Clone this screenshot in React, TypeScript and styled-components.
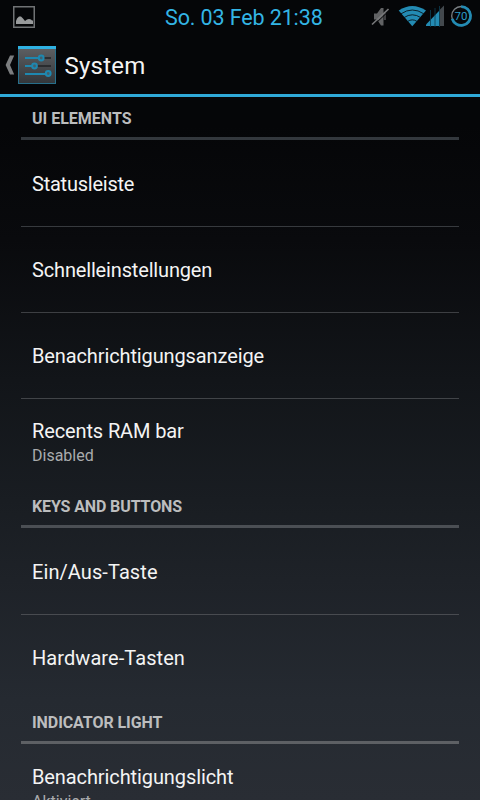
import React from "react";
import styled, { createGlobalStyle } from "styled-components";

const GlobalStyle = createGlobalStyle`
  html, body { margin: 0; padding: 0; background: #050608; }
  * { box-sizing: border-box; }
`;

const Screen = styled.main`
  width: 480px;
  height: 800px;
  overflow: hidden;
  display: flex;
  flex-direction: column;
  font-family: Roboto, "Noto Sans", sans-serif;
  color: #f4f4f4;
  background: linear-gradient(#050608 0, #050608 125px, #090a0d 240px, #121519 380px, #191d22 500px, #1e2228 580px, #252a31 700px, #292d34 800px);
`;

const StatusBar = styled.header`
  height: 36px;
  flex: none;
  display: flex;
  align-items: center;
  padding: 0 7px 0 13px;
  background: #050608;
`;

const Notification = styled.div`
  display: flex;
  padding-bottom: 3px;
`;

const Clock = styled.time`
  font-size: 21.5px;
  line-height: 36px;
  letter-spacing: -0.12px;
  color: #33b5e5;
  margin-left: 130px;
`;

const StatusIcons = styled.div`
  display: flex;
  width: 102px;
  height: 36px;
  margin-left: auto;
`;

const ActionBar = styled.nav`
  height: 61px;
  flex: none;
  display: flex;
  align-items: center;
  gap: 3px;
  padding-left: 5px;
  border-bottom: 3px solid #2fa9d8;
  background: #050608;
`;

const Title = styled.h1`
  margin: 2px 0 0 5.5px;
  font-size: 24px;
  font-weight: 400;
  line-height: 30px;
  letter-spacing: 0.25px;
`;

const List = styled.section`
  flex: none;
  padding: 0 21px;
`;

const SectionTitle = styled.h2<{ $line: string; $spacing?: number }>`
  height: 43px;
  margin: 0;
  padding: 11px 11px 0;
  border-bottom: 3px solid ${(p) => p.$line};
  font-size: 16px;
  line-height: 21px;
  font-weight: 700;
  letter-spacing: ${(p) => p.$spacing ?? 0}px;
  color: #bcbdbe;
`;

const Row = styled.div<{ $line?: string; $tall?: boolean; $top?: number }>`
  height: ${(p) => (p.$tall ? 87 : 86)}px;
  padding: ${(p) => p.$top ?? 2}px 11px 1px;
  border-bottom: ${(p) => (p.$line ? `1px solid ${p.$line}` : "none")};
  display: flex;
  flex-direction: column;
  justify-content: center;
`;

const RowTitle = styled.div<{ $spacing?: number }>`
  font-size: 20px;
  line-height: 26px;
  letter-spacing: ${(p) => p.$spacing ?? 0}px;
`;

const Summary = styled.div<{ $gap?: number }>`
  margin-top: ${(p) => p.$gap ?? 0}px;
  font-size: 16px;
  line-height: 21px;
  color: #a9abad;
`;

const PictureIcon = () => (
  <svg width="22" height="22" viewBox="0 0 22 22">
    <rect x="0.75" y="0.75" width="20.5" height="20.5" fill="none" stroke="#707274" strokeWidth="1.5" />
    <path d="M3 18v-3l1-2.5 2-2h2l2 2 2 2.5 2-1.5 2-.5 2 .5 1 1h1V18z" fill="#999b9c" />
  </svg>
);

const BackIcon = () => (
  <svg width="10" height="20" viewBox="0 0 10 20">
    <path d="M5 .5H9.2L5 10l4.2 9.5H5L.6 10z" fill="#7b7d7f" />
  </svg>
);

const SettingsIcon = () => (
  <svg width="38" height="38" viewBox="0 0 38 38">
    <defs>
      <linearGradient id="panel" x2="0" y2="1">
        <stop stopColor="#5c5e61" />
        <stop offset="1" stopColor="#33373b" />
      </linearGradient>
    </defs>
    <rect width="38" height="38" fill="#276f8b" />
    <rect x="1" y="3" width="36" height="34" fill="url(#panel)" />
    <rect width="38" height="3" fill="#2fb1e2" />
    <path d="M7 12h26M7 20h26M7 28h26" stroke="#202326" strokeWidth="1.5" />
    <path d="M7 12h14M7 20h8M7 28h21" stroke="#1e88b0" strokeWidth="2" />
    <g fill="#455f6b" stroke="#1e88b0" strokeWidth="2">
      <circle cx="23.2" cy="12" r="2.4" />
      <circle cx="16.5" cy="20" r="2.4" />
      <circle cx="30.2" cy="27.5" r="2.4" />
    </g>
  </svg>
);

const MutedIcon = () => (
  <svg width="27" height="36" viewBox="371 0 27 36">
    <path d="M374 13.5h3l4-5.5h2.5v17.5h-2.5l-4-6h-3z" fill="#616264" />
    <path d="M385 13v7" stroke="#505153" strokeWidth="1.5" />
    <path d="M373.2 25.7L389.7 10.2" stroke="#050608" strokeWidth="1" />
    <path d="M372 24.5L388.5 9" stroke="#77787a" strokeWidth="1.7" />
  </svg>
);

const WifiIcon = () => (
  <svg width="28" height="36" viewBox="398 0 28 36">
    <path d="M412.3 26.3L398.7 10.5Q412.3 1.5 426 10.5z" fill="#238bb3" />
    <g fill="none" stroke="#07131a" strokeWidth="0.9">
      <path d="M401 13.8Q412.3 6.2 423.8 13.8" />
      <path d="M404 17.6Q412.3 12 420.8 17.6" />
      <path d="M407.5 21.5Q412.3 18.2 417.2 21.5" />
    </g>
  </svg>
);

const SignalIcon = () => (
  <svg width="22" height="36" viewBox="426 0 22 36">
    <path d="M426 26v-1.5L439.5 10.5V26z" fill="#238bb3" />
    <path d="M439.5 10l4.5-4.5V26h-4.5z" fill="#43494e" />
    <path d="M430.5 10v17M435 8v19M439.5 6v21" stroke="#0a4056" strokeWidth="0.8" />
  </svg>
);

const BatteryIcon = () => (
  <svg width="25" height="36" viewBox="448 0 25 36">
    <circle cx="461.2" cy="16" r="9.5" fill="none" stroke="#7b8084" strokeWidth="1.3" />
    <path d="M461.2 6.6A9.4 9.4 0 1 1 452.2 18.8" fill="none" stroke="#238bb3" strokeWidth="2.8" />
    <text x="460.9" y="20" textAnchor="middle" fontSize="11.5" fontFamily="Roboto, sans-serif" fill="#2a9cc7">70</text>
  </svg>
);

export default function App() {
  return (
    <>
      <GlobalStyle />
      <Screen>
        <StatusBar>
          <Notification>
            <PictureIcon />
          </Notification>
          <Clock>So. 03 Feb 21:38</Clock>
          <StatusIcons>
            <MutedIcon />
            <WifiIcon />
            <SignalIcon />
            <BatteryIcon />
          </StatusIcons>
        </StatusBar>
        <ActionBar>
          <BackIcon />
          <SettingsIcon />
          <Title>System</Title>
        </ActionBar>
        <List>
          <SectionTitle $line="#33383d">UI ELEMENTS</SectionTitle>
          <Row $tall $top={2} $line="#373a3e"><RowTitle $spacing={-0.23}>Statusleiste</RowTitle></Row>
          <Row $top={1} $line="#3d3f43"><RowTitle $spacing={-0.16}>Schnelleinstellungen</RowTitle></Row>
          <Row $top={1} $line="#414448"><RowTitle $spacing={-0.12}>Benachrichtigungsanzeige</RowTitle></Row>
          <Row $top={1}>
            <RowTitle $spacing={-0.12}>Recents RAM bar</RowTitle>
            <Summary $gap={1}>Disabled</Summary>
          </Row>
          <SectionTitle $line="#4b4f54" $spacing={-0.12}>KEYS AND BUTTONS</SectionTitle>
          <Row $tall $top={2} $line="#484b50"><RowTitle $spacing={0.08}>Ein/Aus-Taste</RowTitle></Row>
          <Row $top={1}><RowTitle $spacing={0.07}>Hardware-Tasten</RowTitle></Row>
          <SectionTitle $line="#5d6064" $spacing={-0.08}>INDICATOR LIGHT</SectionTitle>
          <Row $top={3}>
            <RowTitle $spacing={-0.1}>Benachrichtigungslicht</RowTitle>
            <Summary $gap={1}>Aktiviert</Summary>
          </Row>
        </List>
      </Screen>
    </>
  );
}
